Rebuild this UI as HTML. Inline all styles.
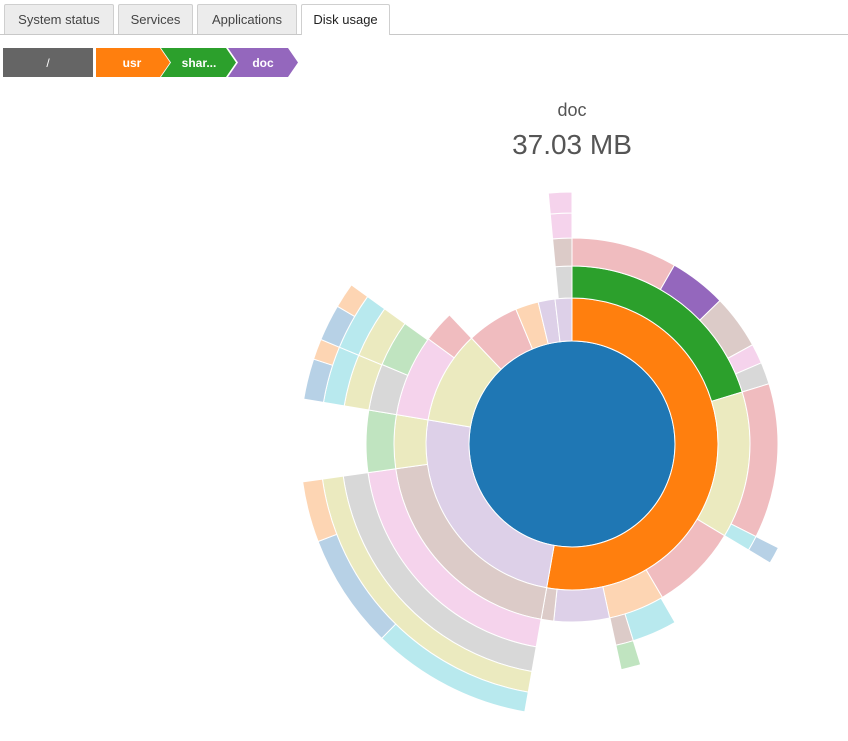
<!DOCTYPE html>
<html><head><meta charset="utf-8">
<style>
html,body{margin:0;padding:0;background:#fff;width:848px;height:741px;overflow:hidden;font-family:"Liberation Sans",sans-serif;}
.tabs{position:absolute;left:0;top:0;width:848px;height:35px;}
.line{position:absolute;left:0;top:34px;width:848px;height:1px;background:#c8c8c8;}
.tab{position:absolute;top:4px;height:30px;box-sizing:border-box;border:1px solid #cfcfcf;border-bottom:none;background:#ececec;color:#444;font-size:13px;line-height:30px;text-align:center;border-radius:2px 2px 0 0;}
.tab.act{background:#fff;height:31px;color:#222;z-index:2}
</style></head><body>
<div class="tabs">
<div class="line"></div>
<div class="tab" style="left:4px;width:110px">System status</div>
<div class="tab" style="left:118px;width:75px">Services</div>
<div class="tab" style="left:197px;width:100px">Applications</div>
<div class="tab act" style="left:301px;width:89px">Disk usage</div>
</div>
<svg width="848" height="741" style="position:absolute;left:0;top:0" xmlns="http://www.w3.org/2000/svg">
<g font-family="Liberation Sans, sans-serif" font-weight="bold" font-size="12" fill="#fff" text-anchor="middle">
<polygon points="3,48 93,48 93,77 3,77" fill="#656565"/>
<polygon points="96,48 160,48 170,62.5 160,77 96,77" fill="#ff7f0e"/>
<polygon points="161,48 226,48 236,62.5 226,77 161,77 171,62.5" fill="#2ca02c"/>
<polygon points="228,48 288,48 298,62.5 288,77 228,77 238,62.5" fill="#9467bd"/>
<text x="48" y="67" font-weight="normal">/</text>
<text x="132" y="67">usr</text>
<text x="199" y="67">shar...</text>
<text x="263" y="67">doc</text>
</g>
<text x="572" y="116" font-family="Liberation Sans, sans-serif" font-size="18" fill="#555" text-anchor="middle">doc</text>
<text x="572" y="154" font-family="Liberation Sans, sans-serif" font-size="28" fill="#555" text-anchor="middle">37.03 MB</text>
<g id="sb" stroke="#fff" stroke-width="1"></g>
</svg>
<script>
var cx=572,cy=444,R=[0,103,146,178,206,231,252,272];
var C={bl:'#1f77b4',or:'#ff7f0e',gr:'#2ca02c',pu:'#9467bd',sa:'#f0bcbf',la:'#ddd0e8',kh:'#ebeabf',pi:'#f5d3ec',ta:'#dccbc8',ga:'#d8d8d8',pe:'#fdd5b3',cy:'#b8e9ee',lb:'#b7d1e6',lg:'#c0e4c0'};
var S=[
[1,0,190,'or'],[1,190,279.5,'la'],[1,279.5,316.5,'kh'],[1,316.5,337.4,'sa'],[1,337.4,346.6,'pe'],[1,346.6,353.3,'la'],[1,353.3,360,'la'],
[2,0,73,'gr'],[2,73,121,'kh'],[2,121,149.5,'sa'],[2,149.5,167.8,'pe'],[2,167.8,185.9,'la'],[2,185.9,190,'ta'],[2,190,262,'ta'],[2,262,279.5,'kh'],[2,279.5,306.2,'pi'],[2,306.2,316.5,'sa'],[2,354.6,360,'ga'],
[3,0,29.8,'sa'],[3,29.8,45.9,'pu'],[3,45.9,61.2,'ta'],[3,61.2,66.8,'pi'],[3,66.8,73,'ga'],[3,73,116.7,'sa'],[3,116.7,121,'cy'],[3,150,162.7,'cy'],[3,162.7,167.7,'ta'],[3,190,262,'pi'],[3,262,279.5,'lg'],[3,279.5,292.7,'ga'],[3,292.7,305.8,'lg'],[3,354.6,360,'ta'],
[4,116.7,121,'lb'],[4,162.7,167.7,'lg'],[4,190,262,'ga'],[4,279.5,292.6,'kh'],[4,292.6,305.8,'kh'],[4,354.6,360,'pi'],
[5,190,262,'kh'],[5,279.5,292.6,'cy'],[5,292.6,305.8,'cy'],[5,354.6,360,'pi'],
[6,190,224.4,'cy'],[6,224.4,249,'lb'],[6,249,262,'pe'],[6,279.5,288.2,'lb'],[6,288.2,292.6,'pe'],[6,292.6,300.4,'lb'],[6,300.4,305.8,'pe']
];
function pt(r,a){a=a*Math.PI/180;return (cx+r*Math.sin(a)).toFixed(2)+','+(cy-r*Math.cos(a)).toFixed(2);}
var h='<circle cx="'+cx+'" cy="'+cy+'" r="103" fill="#1f77b4"/>';
S.forEach(function(s){var r0=R[s[0]],r1=R[s[0]+1],a0=s[1],a1=s[2],l=(a1-a0)>180?1:0;
h+='<path fill="'+C[s[3]]+'" d="M'+pt(r0,a0)+'A'+r0+','+r0+' 0 '+l+' 1 '+pt(r0,a1)+'L'+pt(r1,a1)+'A'+r1+','+r1+' 0 '+l+' 0 '+pt(r1,a0)+'Z"/>';});
document.getElementById('sb').innerHTML=h;
</script>
</body></html>
